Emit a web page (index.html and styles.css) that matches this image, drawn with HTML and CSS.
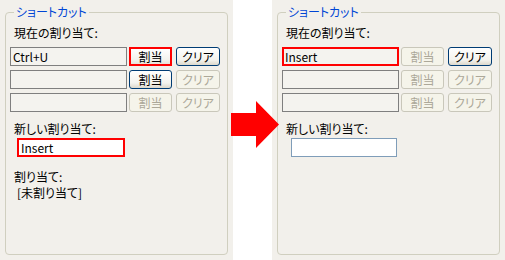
FILE: index.html
```html
<!DOCTYPE html>
<html lang="ja">
<head>
<meta charset="utf-8">
<title>ショートカット</title>
<link rel="stylesheet" href="styles.css">
</head>
<body>
<div class="stage">
  <section class="panel">
    <fieldset class="group">
      <legend>ショートカット</legend>
      <div class="label">現在の割り当て:</div>
      <div class="rows">
        <div class="row"><div class="field">Ctrl+U</div><button class="btn hl">割当</button><button class="btn">クリア</button></div>
        <div class="row"><div class="field"></div><button class="btn">割当</button><button class="btn off">クリア</button></div>
        <div class="row"><div class="field"></div><button class="btn off">割当</button><button class="btn off">クリア</button></div>
      </div>
      <div class="label new">新しい割り当て:</div>
      <div class="input hl">Insert</div>
      <div class="label assigned">割り当て:</div>
      <div class="value">[未割り当て]</div>
    </fieldset>
  </section>

  <svg class="arrow" width="49" height="47" viewBox="0 0 49 47" aria-hidden="true">
    <polygon points="0,12 25,12 25,0 48,23.5 25,47 25,35 0,35" fill="#ff0000"/>
  </svg>

  <section class="panel">
    <fieldset class="group">
      <legend>ショートカット</legend>
      <div class="label">現在の割り当て:</div>
      <div class="rows">
        <div class="row"><div class="field hl">Insert</div><button class="btn off">割当</button><button class="btn">クリア</button></div>
        <div class="row"><div class="field"></div><button class="btn off">割当</button><button class="btn off">クリア</button></div>
        <div class="row"><div class="field"></div><button class="btn off">割当</button><button class="btn off">クリア</button></div>
      </div>
      <div class="label new">新しい割り当て:</div>
      <div class="input"></div>
    </fieldset>
  </section>
</div>
</body>
</html>
```

FILE: styles.css
```css
* { box-sizing: border-box; }

html, body {
  margin: 0;
  background: #ffffff;
}

body {
  font-family: "Noto Sans CJK JP", "Noto Sans", sans-serif;
  font-size: 12px;
  line-height: 14px;
  color: #000;
  font-feature-settings: "palt";
}

.stage {
  position: relative;
  width: 505px;
  height: 260px;
  display: flex;
  justify-content: space-between;
}

.panel {
  width: 233px;
  height: 260px;
  background: #f2f0eb;
  padding: 5px 0 0 5px;
}

.group {
  margin: 0;
  width: 223px;
  height: 250px;
  border: 1px solid #d0cfbf;
  border-radius: 4px;
  padding: 7px 0 0 4px;
  min-width: 0;
}

.group legend {
  margin-left: 4px;
  padding: 0 2px;
  color: #0046d5;
  line-height: 14px;
}

.label {
  margin-left: 4px;
  height: 14px;
}

.rows {
  margin-top: 7px;
  display: flex;
  flex-direction: column;
  gap: 4px;
}

.row {
  display: flex;
  align-items: stretch;
  height: 19px;
}

.field {
  width: 117px;
  margin-right: 2px;
  border: 1px solid #7f7f7f;
  background: #f4f3ef;
  padding: 1px 2px 0;
  line-height: 16px;
  white-space: nowrap;
}

.field.hl {
  border: 2px solid #ff0000;
  padding: 0 1px;
  line-height: 15px;
}

.btn {
  font: inherit;
  font-feature-settings: "palt";
  margin: 0;
  padding: 0;
  width: 43px;
  margin-right: 4px;
  border: 1px solid #003c74;
  border-radius: 3px;
  background: linear-gradient(#ffffff, #f4f3ee 70%, #dcd8cc);
  color: #000;
  line-height: 16px;
}

.btn + .btn { width: 44px; margin-right: 0; }

.btn.off {
  border-color: #c9c7ba;
  background: #f5f4ea;
  color: #aca899;
}

.btn.hl {
  border: 2px solid #ff0000;
  border-radius: 0;
  background: linear-gradient(#ffffff, #f4f3ee 70%, #e6e3d8);
}

.label.new {
  margin-top: 10px;
}

.input {
  margin: 2px 0 0 9px;
  width: 106px;
  height: 19px;
  border: 1px solid #7f9db9;
  background: #ffffff;
  padding: 1px 3px 0;
  line-height: 16px;
}

.input.hl {
  margin-left: 7px;
  width: 108px;
  border: 2px solid #ff0000;
  padding: 0 2px;
  line-height: 15px;
}

.label.assigned {
  margin-top: 13px;
}

.value {
  margin: 2px 0 0 7px;
  height: 14px;
}

.arrow {
  position: absolute;
  left: 231px;
  top: 101px;
}
```
